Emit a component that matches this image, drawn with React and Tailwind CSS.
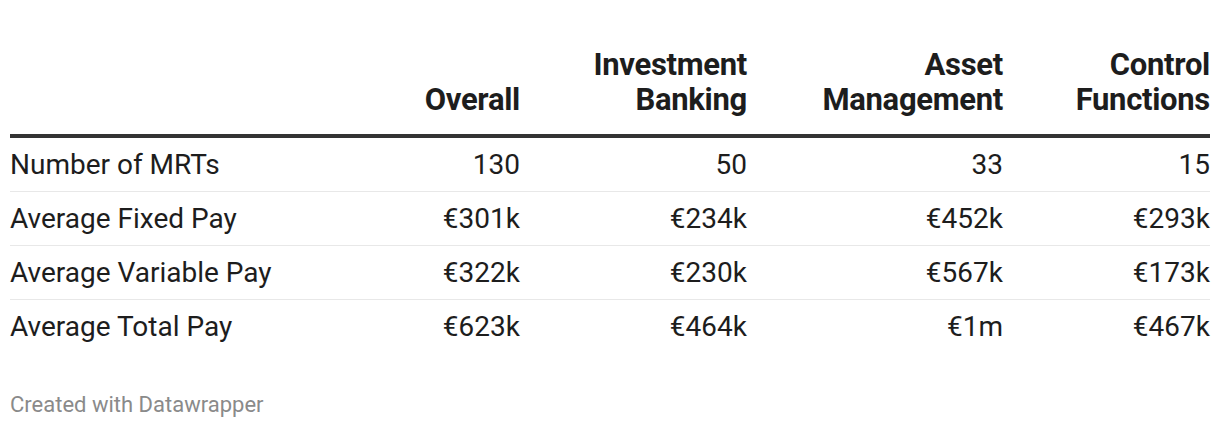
import React from 'react';

const columns = ['Overall', 'Investment Banking', 'Asset Management', 'Control Functions'];

const rows = [
  { label: 'Number of MRTs', values: ['130', '50', '33', '15'] },
  { label: 'Average Fixed Pay', values: ['€301k', '€234k', '€452k', '€293k'] },
  { label: 'Average Variable Pay', values: ['€322k', '€230k', '€567k', '€173k'] },
  { label: 'Average Total Pay', values: ['€623k', '€464k', '€1m', '€467k'] },
];

const grid = 'grid grid-cols-[300px_210px_227px_256px_207px]';

const App = () => {
  return (
    <div
      className="bg-white w-[1220px] h-[428px] px-[10px] pt-[47px] text-[#1d1d1d]"
      style={{ fontFamily: 'Roboto, "Noto Sans", sans-serif' }}
    >
      {/* Header */}
      <div className={`${grid} items-end border-b-4 border-[#333333] pb-[17px]`}>
        <div />
        {columns.map((col) => (
          <div key={col} className="text-right text-[31px] font-bold leading-[35px] tracking-[-0.3px]">
            {col.split(' ').map((w, i) => (
              <div key={i}>{w}</div>
            ))}
          </div>
        ))}
      </div>

      {/* Body */}
      {rows.map((row, i) => (
        <div
          key={row.label}
          className={`${grid} items-center h-[54px] text-[28px] ${
            i < rows.length - 1 ? 'border-b border-[#e8e8e8]' : ''
          }`}
        >
          <div>{row.label}</div>
          {row.values.map((v, j) => (
            <div key={j} className="text-right tabular-nums">
              {v}
            </div>
          ))}
        </div>
      ))}

      <div className="mt-[39px] text-[22px] leading-[24px] text-[#8a8a8a]">Created with Datawrapper</div>
    </div>
  );
};

export default App;
